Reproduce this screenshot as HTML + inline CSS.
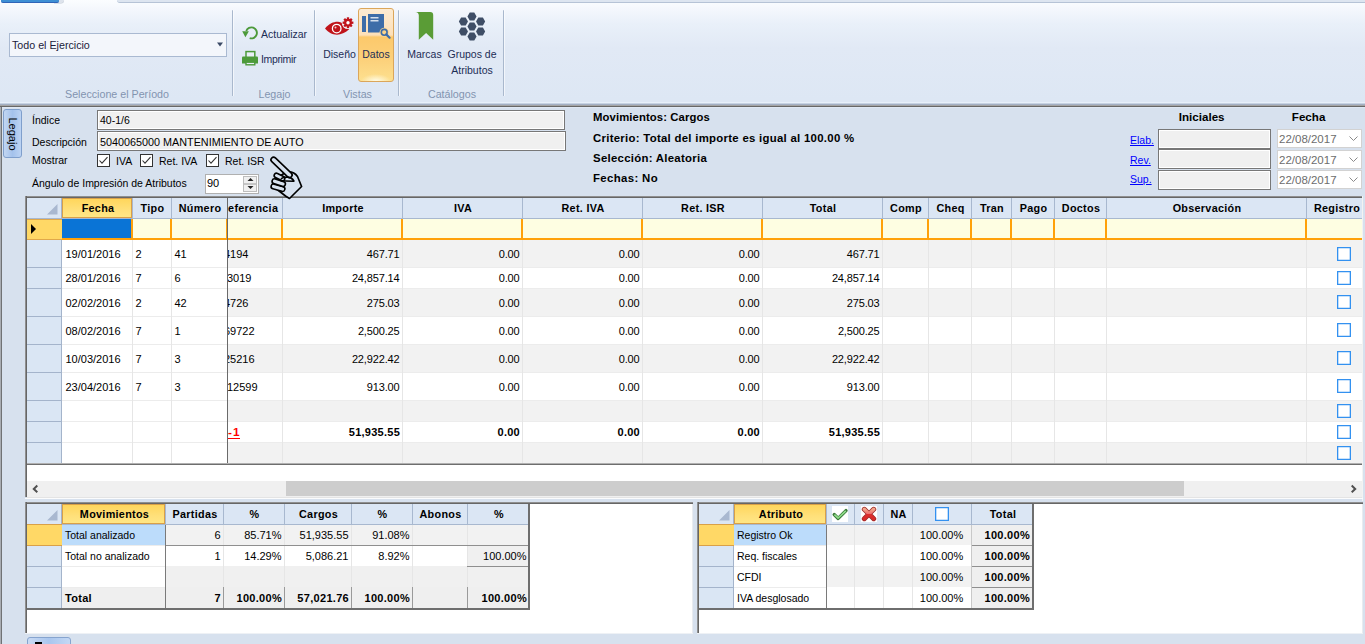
<!DOCTYPE html>
<html><head><meta charset="utf-8"><style>
html,body{margin:0;padding:0;}
body{width:1365px;height:644px;position:relative;overflow:hidden;background:#d7e1ee;font-family:"Liberation Sans", sans-serif;}
.r{position:absolute;box-sizing:content-box;}
svg.r{overflow:visible;}
.t{position:absolute;white-space:nowrap;}
</style></head><body>
<div class="r" style="left:0px;top:0px;width:1365px;height:104px;background:linear-gradient(#fbfdff 0px,#f5f8fd 8px,#e9f0f9 24px,#e1e9f5 48px,#dde7f4 100px);"></div>
<div class="r" style="left:117px;top:0px;width:1248px;height:2px;background:#dde5f0;border-bottom:1px solid #b6c3d6;border-bottom-left-radius:3px;"></div>
<div class="r" style="left:54px;top:0px;width:10px;height:3px;background:#dde3ec;border-bottom-right-radius:3px;box-shadow:0 0.5px 0 #c0c8d4;"></div>
<div class="r" style="left:1px;top:0px;width:58px;height:2px;background:#3e8fd4;border-bottom:1px solid #2f64b8;border-radius:0 0 2px 2px;"></div>
<div class="r" style="left:9px;top:33px;width:216px;height:22px;background:#f3f6fb;border:1px solid #a9b9d1;"></div>
<div class="t" style="top:35.29px;font-size:10.7px;line-height:20px;color:#1a1a3a;left:12px;">Todo el Ejercicio</div>
<svg class="r" style="left:216px;top:42px" width="8" height="6"><path d="M1 0.5 L7 0.5 L4 4.5 Z" fill="#3b4a66"/></svg>
<div class="r" style="left:232px;top:10px;width:1px;height:86px;background:#a9b8cd;border-radius:1px;"></div>
<div class="r" style="left:233px;top:10px;width:1px;height:86px;background:rgba(255,255,255,0.6);"></div>
<div class="r" style="left:314px;top:10px;width:1px;height:86px;background:#a9b8cd;border-radius:1px;"></div>
<div class="r" style="left:315px;top:10px;width:1px;height:86px;background:rgba(255,255,255,0.6);"></div>
<div class="r" style="left:398px;top:10px;width:1px;height:86px;background:#a9b8cd;border-radius:1px;"></div>
<div class="r" style="left:399px;top:10px;width:1px;height:86px;background:rgba(255,255,255,0.6);"></div>
<div class="r" style="left:503px;top:10px;width:1px;height:86px;background:#a9b8cd;border-radius:1px;"></div>
<div class="r" style="left:504px;top:10px;width:1px;height:86px;background:rgba(255,255,255,0.6);"></div>
<div class="t" style="top:84.29px;font-size:10.7px;line-height:20px;color:#8294b0;left:-83.00px;width:400px;text-align:center;">Seleccione el Período</div>
<div class="t" style="top:84.29px;font-size:10.7px;line-height:20px;color:#8294b0;left:74.50px;width:400px;text-align:center;">Legajo</div>
<div class="t" style="top:84.29px;font-size:10.7px;line-height:20px;color:#8294b0;left:157.50px;width:400px;text-align:center;">Vistas</div>
<div class="t" style="top:84.29px;font-size:10.7px;line-height:20px;color:#8294b0;left:252.00px;width:400px;text-align:center;">Catálogos</div>
<div class="t" style="top:24.36px;font-size:10.5px;line-height:20px;color:#1c2d55;left:261px;">Actualizar</div>
<div class="t" style="top:49.36px;font-size:10.5px;line-height:20px;color:#1c2d55;left:261px;letter-spacing:-0.35px;">Imprimir</div>
<svg class="r" style="left:238px;top:22px" width="24" height="46" viewBox="0 0 24 46">
<path d="M8.23 9.02 A5.5 5.5 0 1 1 11.70 16.13" fill="none" stroke="#4c9a3a" stroke-width="1.9"/>
<path d="M4.2 9.2 L10.9 9.2 L7.4 15.2 Z" fill="#4c9a3a"/>
<rect x="8" y="29.6" width="8.8" height="6.4" fill="#e8eef7" stroke="#4c9a3a" stroke-width="1.5"/>
<path d="M5 34.5 L19 34.5 Q20 34.5 20 35.5 L20 41.5 L4 41.5 L4 35.5 Q4 34.5 5 34.5 Z" fill="#4c9a3a"/>
<rect x="8" y="40.2" width="8.8" height="2.6" fill="#e8eef7" stroke="#4c9a3a" stroke-width="1.4"/>
</svg>
<div class="r" style="left:358px;top:8px;width:34px;height:72px;border:1px solid #dba65a;border-radius:3px;background:radial-gradient(ellipse 15px 7px at 50% 100%,#fffbe6,rgba(255,240,180,0)),linear-gradient(#fdebd2 0px,#fde0b8 26px,#fcc96b 28px,#fcd07a 50px,#fde08f 72px);"></div>
<div class="t" style="top:44.36px;font-size:10.5px;line-height:20px;color:#1c2d55;left:139.50px;width:400px;text-align:center;">Diseño</div>
<div class="t" style="top:44.36px;font-size:10.5px;line-height:20px;color:#1c2d55;left:176.00px;width:400px;text-align:center;">Datos</div>
<div class="t" style="top:44.36px;font-size:10.5px;line-height:20px;color:#1c2d55;left:224.50px;width:400px;text-align:center;">Marcas</div>
<div class="t" style="top:44.36px;font-size:10.5px;line-height:20px;color:#1c2d55;left:272.00px;width:400px;text-align:center;">Grupos de</div>
<div class="t" style="top:60.36px;font-size:10.5px;line-height:20px;color:#1c2d55;left:272.00px;width:400px;text-align:center;">Atributos</div>
<svg class="r" style="left:320px;top:12px" width="40" height="28" viewBox="0 0 40 28">
<path d="M5 16.5 C9 11.5 14 9.6 18 9.8 C22 10 25.5 13 29.2 17.3 C25 21 21 22.7 17 22.7 C12 22.7 8 20 5 16.5 Z" fill="#c0141b"/>
<circle cx="16.7" cy="16.6" r="4.3" fill="none" stroke="#fff" stroke-width="1.3"/>
<circle cx="16.7" cy="16.6" r="2.9" fill="#c0141b"/>
<circle cx="15.5" cy="15.4" r="1" fill="#f3c9ca"/>
<circle cx="28" cy="10.7" r="6.3" fill="#eef3fa"/>
<g transform="translate(28,10.7)" fill="#c0141b"><circle r="3.9"/><rect x="-1.15" y="-5.4" width="2.3" height="10.8" transform="rotate(0)"/><rect x="-1.15" y="-5.4" width="2.3" height="10.8" transform="rotate(45)"/><rect x="-1.15" y="-5.4" width="2.3" height="10.8" transform="rotate(90)"/><rect x="-1.15" y="-5.4" width="2.3" height="10.8" transform="rotate(135)"/></g>
<circle cx="28" cy="10.7" r="1.7" fill="#fff"/>
</svg>
<svg class="r" style="left:361px;top:13px" width="30" height="26" viewBox="0 0 30 26">
<rect x="1" y="3" width="4" height="16" fill="#3e6da8"/>
<rect x="7" y="1" width="16" height="18.5" fill="#3e6da8"/>
<rect x="9.5" y="4" width="8" height="1.5" fill="#d6e0ec"/>
<rect x="9.5" y="7" width="8" height="1.5" fill="#d6e0ec"/>
<circle cx="23.2" cy="19.3" r="4.6" fill="#fcd48a"/>
<circle cx="23.2" cy="19.3" r="2.9" fill="none" stroke="#3e6da8" stroke-width="1.6"/>
<path d="M25.3 21.4 L28.6 24.7" stroke="#3e6da8" stroke-width="2.2" stroke-linecap="round"/>
</svg>
<svg class="r" style="left:415px;top:11px" width="20" height="30" viewBox="0 0 20 30">
<path d="M0.3 0.9 L15.2 0.9 Q18.2 0.9 18.2 3.9 L18.2 28.7 L11.1 21.9 L3.8 28.7 L3.8 4.5 Q3.8 1.2 0.3 0.9 Z" fill="#5a9c36"/></svg>
<svg class="r" style="left:458px;top:12px" width="28" height="29" viewBox="0 0 27 28"><path d="M17.90 4.30 L15.70 8.11 L11.30 8.11 L9.10 4.30 L11.30 0.49 L15.70 0.49 Z" fill="#3f4e66"/><path d="M9.60 9.20 L7.40 13.01 L3.00 13.01 L0.80 9.20 L3.00 5.39 L7.40 5.39 Z" fill="#3f4e66"/><path d="M26.20 9.20 L24.00 13.01 L19.60 13.01 L17.40 9.20 L19.60 5.39 L24.00 5.39 Z" fill="#3f4e66"/><path d="M17.90 14.00 L15.70 17.81 L11.30 17.81 L9.10 14.00 L11.30 10.19 L15.70 10.19 Z" fill="#3f4e66"/><path d="M9.60 18.80 L7.40 22.61 L3.00 22.61 L0.80 18.80 L3.00 14.99 L7.40 14.99 Z" fill="#3f4e66"/><path d="M26.20 18.80 L24.00 22.61 L19.60 22.61 L17.40 18.80 L19.60 14.99 L24.00 14.99 Z" fill="#3f4e66"/><path d="M17.90 23.70 L15.70 27.51 L11.30 27.51 L9.10 23.70 L11.30 19.89 L15.70 19.89 Z" fill="#3f4e66"/></svg>
<div class="r" style="left:0px;top:102px;width:1365px;height:1px;background:#e8f0fa;"></div>
<div class="r" style="left:0px;top:103px;width:1365px;height:1px;background:#c6d2e2;"></div>
<div class="r" style="left:0px;top:104px;width:1365px;height:1px;background:#a3afc3;"></div>
<div class="r" style="left:0px;top:105px;width:1365px;height:1px;background:#a5a5a5;"></div>
<div class="r" style="left:0px;top:106px;width:1365px;height:1px;background:#676767;"></div>
<div class="r" style="left:0px;top:107px;width:1365px;height:1px;background:#dfe8f4;"></div>
<div class="r" style="left:0px;top:108px;width:1365px;height:536px;background:#d7e1ee;"></div>
<div class="r" style="left:0px;top:107px;width:1px;height:537px;background:#a9adb3;"></div>
<div class="r" style="left:1px;top:107px;width:1px;height:537px;background:#707275;"></div>
<div class="r" style="left:3px;top:109px;width:17px;height:47px;border:1px solid #7f9fcc;border-radius:3px;background:linear-gradient(90deg,#c2d6f2,#a4c2ec 50%,#bcd3f3);"></div>
<div class="t" style="left:-12.5px;top:123.5px;width:50px;height:20px;font-size:11px;line-height:20px;text-align:center;transform:rotate(90deg);color:#000;">Legajo</div>
<div class="t" style="top:110.36px;font-size:10.5px;line-height:20px;color:#000;left:32px;">Índice</div>
<div class="t" style="top:132.36px;font-size:10.5px;line-height:20px;color:#000;left:32px;">Descripción</div>
<div class="t" style="top:150.36px;font-size:10.5px;line-height:20px;color:#000;left:32px;">Mostrar</div>
<div class="t" style="top:173.36px;font-size:10.5px;line-height:20px;color:#000;left:32px;">Ángulo de Impresión de Atributos</div>
<div class="r" style="left:97px;top:110px;width:466px;height:18px;background:#f0f0f0;border:1px solid #777;box-shadow:inset 0 0 0 1px #fff;"></div>
<div class="r" style="left:97px;top:131px;width:467px;height:18px;background:#f0f0f0;border:1px solid #777;box-shadow:inset 0 0 0 1px #fff;"></div>
<div class="t" style="top:110.36px;font-size:10.5px;line-height:20px;color:#000;left:100px;">40-1/6</div>
<div class="t" style="top:132.26px;font-size:10.8px;line-height:20px;color:#000;left:100px;">5040065000 MANTENIMIENTO DE AUTO</div>
<svg class="r" style="left:97px;top:154px" width="13" height="13" viewBox="0 0 13 13"><rect x="0.5" y="0.5" width="12" height="12" fill="#fff" stroke="#333"/><path d="M2.5 6.5 L5 9.2 L10.5 3.2" fill="none" stroke="#333" stroke-width="1.1"/></svg>
<svg class="r" style="left:140px;top:154px" width="13" height="13" viewBox="0 0 13 13"><rect x="0.5" y="0.5" width="12" height="12" fill="#fff" stroke="#333"/><path d="M2.5 6.5 L5 9.2 L10.5 3.2" fill="none" stroke="#333" stroke-width="1.1"/></svg>
<svg class="r" style="left:206px;top:154px" width="13" height="13" viewBox="0 0 13 13"><rect x="0.5" y="0.5" width="12" height="12" fill="#fff" stroke="#333"/><path d="M2.5 6.5 L5 9.2 L10.5 3.2" fill="none" stroke="#333" stroke-width="1.1"/></svg>
<div class="t" style="top:150.86px;font-size:10.5px;line-height:20px;color:#000;left:116px;">IVA</div>
<div class="t" style="top:150.86px;font-size:10.5px;line-height:20px;color:#000;left:159px;">Ret. IVA</div>
<div class="t" style="top:150.86px;font-size:10.5px;line-height:20px;color:#000;left:225px;">Ret. ISR</div>
<div class="r" style="left:205px;top:174px;width:52px;height:18px;background:#fff;border:1px solid #b0b0b0;"></div>
<div class="t" style="top:173.19px;font-size:11px;line-height:20px;color:#000;left:207px;">90</div>
<div class="r" style="left:243px;top:176px;width:12px;height:14px;background:#f0f0f0;border:1px solid #bdbdbd;"></div>
<div class="r" style="left:244px;top:183px;width:12px;height:2px;background:#c6c6c6;"></div>
<svg class="r" style="left:246px;top:176px" width="9" height="15"><path d="M1.5 5 L4.5 2 L7.5 5 Z" fill="#222"/><path d="M1.5 10 L4.5 13 L7.5 10 Z" fill="#222"/></svg>
<svg class="r" style="left:264px;top:150px;z-index:10" width="46" height="54" viewBox="0 0 46 54"><path d="M22 22 Q30 21 33.5 26.5 L37.6 36.5 L25.5 48.5 L21.5 46 L10 37 Q8 34 9 31 Z" fill="#d8e2ef" stroke="#000" stroke-width="1.7" stroke-linejoin="round"/><path d="M9.5 36.5 L18.5 39" stroke="#000" stroke-width="6.4" stroke-linecap="round"/><path d="M9.5 36.5 L18.5 39" stroke="#d8e2ef" stroke-width="3.2" stroke-linecap="round"/><path d="M10.5 31.2 L19 34" stroke="#000" stroke-width="6.4" stroke-linecap="round"/><path d="M10.5 31.2 L19 34" stroke="#d8e2ef" stroke-width="3.2" stroke-linecap="round"/><path d="M12.5 25.5 L18.5 28.5" stroke="#000" stroke-width="6.2" stroke-linecap="round"/><path d="M12.5 25.5 L18.5 28.5" stroke="#d8e2ef" stroke-width="3" stroke-linecap="round"/><path d="M9.6 9.8 L25.5 25" stroke="#000" stroke-width="6.800000000000001" stroke-linecap="round"/><path d="M9.6 9.8 L25.5 25" stroke="#d8e2ef" stroke-width="3.6" stroke-linecap="round"/><path d="M17.5 28.5 Q19 27 24 27.2 Q28 27.6 29.8 31" fill="none" stroke="#000" stroke-width="1.7" stroke-linecap="round"/><path d="M16.5 30.5 Q20 31 29.5 31.2" fill="none" stroke="#000" stroke-width="1.6" stroke-linecap="round"/></svg>
<div class="t" style="top:107.08px;font-size:11.3px;line-height:20px;color:#000;font-weight:bold;left:593px;letter-spacing:0.1px;">Movimientos: Cargos</div>
<div class="t" style="top:127.75px;font-size:11.4px;line-height:20px;color:#000;font-weight:bold;left:593px;letter-spacing:0.28px;">Criterio: Total del importe es igual al 100.00 %</div>
<div class="t" style="top:148.05px;font-size:11.4px;line-height:20px;color:#000;font-weight:bold;left:593px;letter-spacing:0.28px;">Selección: Aleatoria</div>
<div class="t" style="top:168.05px;font-size:11.4px;line-height:20px;color:#000;font-weight:bold;left:593px;letter-spacing:0.36px;">Fechas: No</div>
<div class="t" style="top:106.98px;font-size:11.6px;line-height:20px;color:#000;font-weight:bold;left:1001.70px;width:400px;text-align:center;">Iniciales</div>
<div class="t" style="top:106.98px;font-size:11.6px;line-height:20px;color:#000;font-weight:bold;left:1108.60px;width:400px;text-align:center;">Fecha</div>
<div class="t" style="top:130.06px;font-size:10.5px;line-height:20px;color:#0000ff;left:1130px;text-decoration:underline;">Elab.</div>
<div class="t" style="top:149.56px;font-size:10.5px;line-height:20px;color:#0000ff;left:1130px;text-decoration:underline;">Rev.</div>
<div class="t" style="top:169.06px;font-size:10.5px;line-height:20px;color:#0000ff;left:1130px;text-decoration:underline;">Sup.</div>
<div class="r" style="left:1158px;top:129px;width:111px;height:18px;background:#f0f0f0;border:1px solid #777;box-shadow:inset 0 0 0 1px #fff;"></div>
<div class="r" style="left:1158px;top:149px;width:111px;height:18px;background:#f0f0f0;border:1px solid #777;box-shadow:inset 0 0 0 1px #fff;"></div>
<div class="r" style="left:1158px;top:170px;width:111px;height:18px;background:#f0f0f0;border:1px solid #777;box-shadow:inset 0 0 0 1px #fff;"></div>
<div class="r" style="left:1277px;top:129px;width:83px;height:17px;background:#fff;border:1px solid #d2d2d2;"></div>
<div class="t" style="top:128.52px;font-size:11.5px;line-height:20px;color:#6d6d6d;left:1279px;">22/08/2017</div>
<svg class="r" style="left:1349px;top:136px" width="9" height="6"><path d="M0.5 0.5 L4.5 4.5 L8.5 0.5" fill="none" stroke="#8a8a8a" stroke-width="1"/></svg>
<div class="r" style="left:1277px;top:150px;width:83px;height:17px;background:#fff;border:1px solid #d2d2d2;"></div>
<div class="t" style="top:149.52px;font-size:11.5px;line-height:20px;color:#6d6d6d;left:1279px;">22/08/2017</div>
<svg class="r" style="left:1349px;top:157px" width="9" height="6"><path d="M0.5 0.5 L4.5 4.5 L8.5 0.5" fill="none" stroke="#8a8a8a" stroke-width="1"/></svg>
<div class="r" style="left:1277px;top:170px;width:83px;height:17px;background:#fff;border:1px solid #d2d2d2;"></div>
<div class="t" style="top:169.52px;font-size:11.5px;line-height:20px;color:#6d6d6d;left:1279px;">22/08/2017</div>
<svg class="r" style="left:1349px;top:177px" width="9" height="6"><path d="M0.5 0.5 L4.5 4.5 L8.5 0.5" fill="none" stroke="#8a8a8a" stroke-width="1"/></svg>
<div class="r" style="left:25px;top:196px;width:1338px;height:2px;background:linear-gradient(#8f8f8f 50%,#666 50%);"></div>
<div class="r" style="left:25px;top:196px;width:2px;height:301px;background:linear-gradient(90deg,#8f8f8f 50%,#666 50%);"></div>
<div class="r" style="left:27px;top:198px;width:1335px;height:21px;background:#dbe6f4;border-bottom:1px solid #a8b8cf;box-sizing:border-box;"></div>
<div class="r" style="left:27px;top:219px;width:35px;height:245px;background:#dae6f4;"></div>
<svg class="r" style="left:47px;top:204px" width="11" height="11"><path d="M10.5 0 L10.5 10.5 L0 10.5 Z" fill="#a9b8d0"/></svg>
<div class="r" style="left:61px;top:198px;width:1px;height:266px;background:#a4b4cb;"></div>
<div class="r" style="left:62px;top:240px;width:165px;height:27px;background:#fff;"></div>
<div class="r" style="left:228px;top:240px;width:1134px;height:27px;background:#f2f2f2;"></div>
<div class="r" style="left:62px;top:267px;width:165px;height:21px;background:#fff;"></div>
<div class="r" style="left:228px;top:267px;width:1134px;height:21px;background:#ffffff;"></div>
<div class="r" style="left:62px;top:288px;width:165px;height:28px;background:#fff;"></div>
<div class="r" style="left:228px;top:288px;width:1134px;height:28px;background:#f2f2f2;"></div>
<div class="r" style="left:62px;top:316px;width:165px;height:28px;background:#fff;"></div>
<div class="r" style="left:228px;top:316px;width:1134px;height:28px;background:#ffffff;"></div>
<div class="r" style="left:62px;top:344px;width:165px;height:28px;background:#fff;"></div>
<div class="r" style="left:228px;top:344px;width:1134px;height:28px;background:#f2f2f2;"></div>
<div class="r" style="left:62px;top:372px;width:165px;height:28px;background:#fff;"></div>
<div class="r" style="left:228px;top:372px;width:1134px;height:28px;background:#ffffff;"></div>
<div class="r" style="left:62px;top:400px;width:165px;height:21px;background:#fff;"></div>
<div class="r" style="left:228px;top:400px;width:1134px;height:21px;background:#f2f2f2;"></div>
<div class="r" style="left:62px;top:421px;width:165px;height:21px;background:#fff;"></div>
<div class="r" style="left:228px;top:421px;width:1134px;height:21px;background:#ffffff;"></div>
<div class="r" style="left:62px;top:442px;width:165px;height:22px;background:#fff;"></div>
<div class="r" style="left:228px;top:442px;width:1134px;height:22px;background:#f2f2f2;"></div>
<div class="r" style="left:62px;top:267px;width:1300px;height:1px;background:#ececec;"></div>
<div class="r" style="left:27px;top:267px;width:35px;height:1px;background:#a4b4cb;"></div>
<div class="r" style="left:62px;top:288px;width:1300px;height:1px;background:#ececec;"></div>
<div class="r" style="left:27px;top:288px;width:35px;height:1px;background:#a4b4cb;"></div>
<div class="r" style="left:62px;top:316px;width:1300px;height:1px;background:#ececec;"></div>
<div class="r" style="left:27px;top:316px;width:35px;height:1px;background:#a4b4cb;"></div>
<div class="r" style="left:62px;top:344px;width:1300px;height:1px;background:#ececec;"></div>
<div class="r" style="left:27px;top:344px;width:35px;height:1px;background:#a4b4cb;"></div>
<div class="r" style="left:62px;top:372px;width:1300px;height:1px;background:#ececec;"></div>
<div class="r" style="left:27px;top:372px;width:35px;height:1px;background:#a4b4cb;"></div>
<div class="r" style="left:62px;top:400px;width:1300px;height:1px;background:#ececec;"></div>
<div class="r" style="left:27px;top:400px;width:35px;height:1px;background:#a4b4cb;"></div>
<div class="r" style="left:62px;top:421px;width:1300px;height:1px;background:#ececec;"></div>
<div class="r" style="left:27px;top:421px;width:35px;height:1px;background:#a4b4cb;"></div>
<div class="r" style="left:62px;top:442px;width:1300px;height:1px;background:#ececec;"></div>
<div class="r" style="left:27px;top:442px;width:35px;height:1px;background:#a4b4cb;"></div>
<div class="r" style="left:132px;top:240px;width:1px;height:224px;background:#e6e6e6;"></div>
<div class="r" style="left:171px;top:240px;width:1px;height:224px;background:#e6e6e6;"></div>
<div class="r" style="left:282px;top:240px;width:1px;height:224px;background:#e6e6e6;"></div>
<div class="r" style="left:402px;top:240px;width:1px;height:224px;background:#e6e6e6;"></div>
<div class="r" style="left:522px;top:240px;width:1px;height:224px;background:#e6e6e6;"></div>
<div class="r" style="left:642px;top:240px;width:1px;height:224px;background:#e6e6e6;"></div>
<div class="r" style="left:762px;top:240px;width:1px;height:224px;background:#e6e6e6;"></div>
<div class="r" style="left:882px;top:240px;width:1px;height:224px;background:#e6e6e6;"></div>
<div class="r" style="left:928px;top:240px;width:1px;height:224px;background:#e6e6e6;"></div>
<div class="r" style="left:971px;top:240px;width:1px;height:224px;background:#e6e6e6;"></div>
<div class="r" style="left:1011px;top:240px;width:1px;height:224px;background:#e6e6e6;"></div>
<div class="r" style="left:1054px;top:240px;width:1px;height:224px;background:#e6e6e6;"></div>
<div class="r" style="left:1106px;top:240px;width:1px;height:224px;background:#e6e6e6;"></div>
<div class="r" style="left:1306px;top:240px;width:1px;height:224px;background:#e6e6e6;"></div>
<div class="r" style="left:132px;top:198px;width:1px;height:20px;background:#a8b8cf;"></div>
<div class="r" style="left:171px;top:198px;width:1px;height:20px;background:#a8b8cf;"></div>
<div class="r" style="left:227px;top:198px;width:1px;height:20px;background:#a8b8cf;"></div>
<div class="r" style="left:282px;top:198px;width:1px;height:20px;background:#a8b8cf;"></div>
<div class="r" style="left:402px;top:198px;width:1px;height:20px;background:#a8b8cf;"></div>
<div class="r" style="left:522px;top:198px;width:1px;height:20px;background:#a8b8cf;"></div>
<div class="r" style="left:642px;top:198px;width:1px;height:20px;background:#a8b8cf;"></div>
<div class="r" style="left:762px;top:198px;width:1px;height:20px;background:#a8b8cf;"></div>
<div class="r" style="left:882px;top:198px;width:1px;height:20px;background:#a8b8cf;"></div>
<div class="r" style="left:928px;top:198px;width:1px;height:20px;background:#a8b8cf;"></div>
<div class="r" style="left:971px;top:198px;width:1px;height:20px;background:#a8b8cf;"></div>
<div class="r" style="left:1011px;top:198px;width:1px;height:20px;background:#a8b8cf;"></div>
<div class="r" style="left:1054px;top:198px;width:1px;height:20px;background:#a8b8cf;"></div>
<div class="r" style="left:1106px;top:198px;width:1px;height:20px;background:#a8b8cf;"></div>
<div class="r" style="left:1306px;top:198px;width:1px;height:20px;background:#a8b8cf;"></div>
<div class="r" style="left:62px;top:198px;width:70px;height:20px;background:linear-gradient(#ffd65c,#ffe07a 60%,#ffe685);border:1px solid #d9a048;box-sizing:border-box;"></div>
<div class="r" style="left:62px;top:219px;width:1300px;height:21px;background:#fefee2;"></div>
<div class="r" style="left:27px;top:219px;width:35px;height:21px;background:#ffd866;border-top:1px solid #e0a84a;border-bottom:1px solid #e0a84a;box-sizing:border-box;"></div>
<svg class="r" style="left:31px;top:224px" width="6" height="10"><path d="M0 0 L5 5 L0 10 Z" fill="#000"/></svg>
<div class="r" style="left:62px;top:219px;width:69px;height:19px;background:#0a74d6;"></div>
<div class="r" style="left:62px;top:238px;width:1300px;height:2px;background:#ffa10a;"></div>
<div class="r" style="left:131px;top:219px;width:2px;height:21px;background:#ffa10a;"></div>
<div class="r" style="left:170px;top:219px;width:2px;height:21px;background:#ffa10a;"></div>
<div class="r" style="left:226px;top:219px;width:2px;height:21px;background:#ffa10a;"></div>
<div class="r" style="left:281px;top:219px;width:2px;height:21px;background:#ffa10a;"></div>
<div class="r" style="left:401px;top:219px;width:2px;height:21px;background:#ffa10a;"></div>
<div class="r" style="left:521px;top:219px;width:2px;height:21px;background:#ffa10a;"></div>
<div class="r" style="left:641px;top:219px;width:2px;height:21px;background:#ffa10a;"></div>
<div class="r" style="left:761px;top:219px;width:2px;height:21px;background:#ffa10a;"></div>
<div class="r" style="left:881px;top:219px;width:2px;height:21px;background:#ffa10a;"></div>
<div class="r" style="left:927px;top:219px;width:2px;height:21px;background:#ffa10a;"></div>
<div class="r" style="left:970px;top:219px;width:2px;height:21px;background:#ffa10a;"></div>
<div class="r" style="left:1010px;top:219px;width:2px;height:21px;background:#ffa10a;"></div>
<div class="r" style="left:1053px;top:219px;width:2px;height:21px;background:#ffa10a;"></div>
<div class="r" style="left:1105px;top:219px;width:2px;height:21px;background:#ffa10a;"></div>
<div class="r" style="left:1305px;top:219px;width:2px;height:21px;background:#ffa10a;"></div>
<div class="r" style="left:227px;top:198px;width:1px;height:266px;background:#6a6a6a;"></div>
<div class="t" style="top:198.26px;font-size:10.8px;line-height:20px;color:#000;font-weight:bold;left:-102.00px;width:400px;text-align:center;letter-spacing:0.3px;">Fecha</div>
<div class="t" style="top:198.26px;font-size:10.8px;line-height:20px;color:#000;font-weight:bold;left:-47.50px;width:400px;text-align:center;letter-spacing:0.3px;">Tipo</div>
<div class="t" style="top:198.26px;font-size:10.8px;line-height:20px;color:#000;font-weight:bold;left:0.00px;width:400px;text-align:center;letter-spacing:0.3px;">Número</div>
<div class="r" style="left:228px;top:198px;width:54px;height:20px;overflow:hidden;"><div class="t" style="left:-8px;top:0.3px;font-size:10.8px;line-height:20px;font-weight:bold;letter-spacing:0.3px;">Referencia</div></div>
<div class="t" style="top:198.26px;font-size:10.8px;line-height:20px;color:#000;font-weight:bold;left:143.00px;width:400px;text-align:center;letter-spacing:0.3px;">Importe</div>
<div class="t" style="top:198.26px;font-size:10.8px;line-height:20px;color:#000;font-weight:bold;left:263.00px;width:400px;text-align:center;letter-spacing:0.3px;">IVA</div>
<div class="t" style="top:198.26px;font-size:10.8px;line-height:20px;color:#000;font-weight:bold;left:383.00px;width:400px;text-align:center;letter-spacing:0.3px;">Ret. IVA</div>
<div class="t" style="top:198.26px;font-size:10.8px;line-height:20px;color:#000;font-weight:bold;left:503.00px;width:400px;text-align:center;letter-spacing:0.3px;">Ret. ISR</div>
<div class="t" style="top:198.26px;font-size:10.8px;line-height:20px;color:#000;font-weight:bold;left:623.00px;width:400px;text-align:center;letter-spacing:0.3px;">Total</div>
<div class="t" style="top:198.26px;font-size:10.8px;line-height:20px;color:#000;font-weight:bold;left:706.00px;width:400px;text-align:center;letter-spacing:0.3px;">Comp</div>
<div class="t" style="top:198.26px;font-size:10.8px;line-height:20px;color:#000;font-weight:bold;left:750.50px;width:400px;text-align:center;letter-spacing:0.3px;">Cheq</div>
<div class="t" style="top:198.26px;font-size:10.8px;line-height:20px;color:#000;font-weight:bold;left:792.00px;width:400px;text-align:center;letter-spacing:0.3px;">Tran</div>
<div class="t" style="top:198.26px;font-size:10.8px;line-height:20px;color:#000;font-weight:bold;left:833.50px;width:400px;text-align:center;letter-spacing:0.3px;">Pago</div>
<div class="t" style="top:198.26px;font-size:10.8px;line-height:20px;color:#000;font-weight:bold;left:881.00px;width:400px;text-align:center;letter-spacing:0.3px;">Doctos</div>
<div class="t" style="top:198.26px;font-size:10.8px;line-height:20px;color:#000;font-weight:bold;left:1007.00px;width:400px;text-align:center;letter-spacing:0.3px;">Observación</div>
<div class="t" style="top:198.26px;font-size:10.8px;line-height:20px;color:#000;font-weight:bold;left:1137.00px;width:400px;text-align:center;letter-spacing:0.3px;">Registro</div>
<div class="t" style="top:244.29px;font-size:11px;line-height:20px;color:#000;left:65.5px;">19/01/2016</div>
<div class="t" style="top:244.29px;font-size:11px;line-height:20px;color:#000;left:135.5px;">2</div>
<div class="t" style="top:244.29px;font-size:11px;line-height:20px;color:#000;left:174.5px;">41</div>
<div class="r" style="left:228px;top:240px;width:54px;height:27px;overflow:hidden;"><div class="t" style="left:-4px;top:4.29px;font-size:11px;line-height:20px;">4194</div></div>
<div class="t" style="top:244.29px;font-size:11px;line-height:20px;color:#000;right:965.5px;text-align:right;letter-spacing:-0.15px;">467.71</div>
<div class="t" style="top:244.29px;font-size:11px;line-height:20px;color:#000;right:845.5px;text-align:right;letter-spacing:-0.15px;">0.00</div>
<div class="t" style="top:244.29px;font-size:11px;line-height:20px;color:#000;right:725.5px;text-align:right;letter-spacing:-0.15px;">0.00</div>
<div class="t" style="top:244.29px;font-size:11px;line-height:20px;color:#000;right:605.5px;text-align:right;letter-spacing:-0.15px;">0.00</div>
<div class="t" style="top:244.29px;font-size:11px;line-height:20px;color:#000;right:485.5px;text-align:right;letter-spacing:-0.15px;">467.71</div>
<div class="t" style="top:268.29px;font-size:11px;line-height:20px;color:#000;left:65.5px;">28/01/2016</div>
<div class="t" style="top:268.29px;font-size:11px;line-height:20px;color:#000;left:135.5px;">7</div>
<div class="t" style="top:268.29px;font-size:11px;line-height:20px;color:#000;left:174.5px;">6</div>
<div class="r" style="left:228px;top:267px;width:54px;height:21px;overflow:hidden;"><div class="t" style="left:-1px;top:1.29px;font-size:11px;line-height:20px;">3019</div></div>
<div class="t" style="top:268.29px;font-size:11px;line-height:20px;color:#000;right:965.5px;text-align:right;letter-spacing:-0.15px;">24,857.14</div>
<div class="t" style="top:268.29px;font-size:11px;line-height:20px;color:#000;right:845.5px;text-align:right;letter-spacing:-0.15px;">0.00</div>
<div class="t" style="top:268.29px;font-size:11px;line-height:20px;color:#000;right:725.5px;text-align:right;letter-spacing:-0.15px;">0.00</div>
<div class="t" style="top:268.29px;font-size:11px;line-height:20px;color:#000;right:605.5px;text-align:right;letter-spacing:-0.15px;">0.00</div>
<div class="t" style="top:268.29px;font-size:11px;line-height:20px;color:#000;right:485.5px;text-align:right;letter-spacing:-0.15px;">24,857.14</div>
<div class="t" style="top:292.79px;font-size:11px;line-height:20px;color:#000;left:65.5px;">02/02/2016</div>
<div class="t" style="top:292.79px;font-size:11px;line-height:20px;color:#000;left:135.5px;">2</div>
<div class="t" style="top:292.79px;font-size:11px;line-height:20px;color:#000;left:174.5px;">42</div>
<div class="r" style="left:228px;top:288px;width:54px;height:28px;overflow:hidden;"><div class="t" style="left:-4px;top:4.79px;font-size:11px;line-height:20px;">4726</div></div>
<div class="t" style="top:292.79px;font-size:11px;line-height:20px;color:#000;right:965.5px;text-align:right;letter-spacing:-0.15px;">275.03</div>
<div class="t" style="top:292.79px;font-size:11px;line-height:20px;color:#000;right:845.5px;text-align:right;letter-spacing:-0.15px;">0.00</div>
<div class="t" style="top:292.79px;font-size:11px;line-height:20px;color:#000;right:725.5px;text-align:right;letter-spacing:-0.15px;">0.00</div>
<div class="t" style="top:292.79px;font-size:11px;line-height:20px;color:#000;right:605.5px;text-align:right;letter-spacing:-0.15px;">0.00</div>
<div class="t" style="top:292.79px;font-size:11px;line-height:20px;color:#000;right:485.5px;text-align:right;letter-spacing:-0.15px;">275.03</div>
<div class="t" style="top:320.79px;font-size:11px;line-height:20px;color:#000;left:65.5px;">08/02/2016</div>
<div class="t" style="top:320.79px;font-size:11px;line-height:20px;color:#000;left:135.5px;">7</div>
<div class="t" style="top:320.79px;font-size:11px;line-height:20px;color:#000;left:174.5px;">1</div>
<div class="r" style="left:228px;top:316px;width:54px;height:28px;overflow:hidden;"><div class="t" style="left:-4px;top:4.79px;font-size:11px;line-height:20px;">69722</div></div>
<div class="t" style="top:320.79px;font-size:11px;line-height:20px;color:#000;right:965.5px;text-align:right;letter-spacing:-0.15px;">2,500.25</div>
<div class="t" style="top:320.79px;font-size:11px;line-height:20px;color:#000;right:845.5px;text-align:right;letter-spacing:-0.15px;">0.00</div>
<div class="t" style="top:320.79px;font-size:11px;line-height:20px;color:#000;right:725.5px;text-align:right;letter-spacing:-0.15px;">0.00</div>
<div class="t" style="top:320.79px;font-size:11px;line-height:20px;color:#000;right:605.5px;text-align:right;letter-spacing:-0.15px;">0.00</div>
<div class="t" style="top:320.79px;font-size:11px;line-height:20px;color:#000;right:485.5px;text-align:right;letter-spacing:-0.15px;">2,500.25</div>
<div class="t" style="top:348.79px;font-size:11px;line-height:20px;color:#000;left:65.5px;">10/03/2016</div>
<div class="t" style="top:348.79px;font-size:11px;line-height:20px;color:#000;left:135.5px;">7</div>
<div class="t" style="top:348.79px;font-size:11px;line-height:20px;color:#000;left:174.5px;">3</div>
<div class="r" style="left:228px;top:344px;width:54px;height:28px;overflow:hidden;"><div class="t" style="left:-4px;top:4.79px;font-size:11px;line-height:20px;">25216</div></div>
<div class="t" style="top:348.79px;font-size:11px;line-height:20px;color:#000;right:965.5px;text-align:right;letter-spacing:-0.15px;">22,922.42</div>
<div class="t" style="top:348.79px;font-size:11px;line-height:20px;color:#000;right:845.5px;text-align:right;letter-spacing:-0.15px;">0.00</div>
<div class="t" style="top:348.79px;font-size:11px;line-height:20px;color:#000;right:725.5px;text-align:right;letter-spacing:-0.15px;">0.00</div>
<div class="t" style="top:348.79px;font-size:11px;line-height:20px;color:#000;right:605.5px;text-align:right;letter-spacing:-0.15px;">0.00</div>
<div class="t" style="top:348.79px;font-size:11px;line-height:20px;color:#000;right:485.5px;text-align:right;letter-spacing:-0.15px;">22,922.42</div>
<div class="t" style="top:376.79px;font-size:11px;line-height:20px;color:#000;left:65.5px;">23/04/2016</div>
<div class="t" style="top:376.79px;font-size:11px;line-height:20px;color:#000;left:135.5px;">7</div>
<div class="t" style="top:376.79px;font-size:11px;line-height:20px;color:#000;left:174.5px;">3</div>
<div class="r" style="left:228px;top:372px;width:54px;height:28px;overflow:hidden;"><div class="t" style="left:-1px;top:4.79px;font-size:11px;line-height:20px;">12599</div></div>
<div class="t" style="top:376.79px;font-size:11px;line-height:20px;color:#000;right:965.5px;text-align:right;letter-spacing:-0.15px;">913.00</div>
<div class="t" style="top:376.79px;font-size:11px;line-height:20px;color:#000;right:845.5px;text-align:right;letter-spacing:-0.15px;">0.00</div>
<div class="t" style="top:376.79px;font-size:11px;line-height:20px;color:#000;right:725.5px;text-align:right;letter-spacing:-0.15px;">0.00</div>
<div class="t" style="top:376.79px;font-size:11px;line-height:20px;color:#000;right:605.5px;text-align:right;letter-spacing:-0.15px;">0.00</div>
<div class="t" style="top:376.79px;font-size:11px;line-height:20px;color:#000;right:485.5px;text-align:right;letter-spacing:-0.15px;">913.00</div>
<div class="t" style="top:422.01px;font-size:11.8px;line-height:20px;color:#ff0000;font-weight:bold;left:228px;letter-spacing:1px;">-1</div>
<div class="r" style="left:228px;top:438px;width:12px;height:1px;background:#ff0000;"></div>
<div class="t" style="top:422.29px;font-size:11px;line-height:20px;color:#000;font-weight:bold;right:965px;text-align:right;letter-spacing:0.25px;">51,935.55</div>
<div class="t" style="top:422.29px;font-size:11px;line-height:20px;color:#000;font-weight:bold;right:845px;text-align:right;letter-spacing:0.25px;">0.00</div>
<div class="t" style="top:422.29px;font-size:11px;line-height:20px;color:#000;font-weight:bold;right:725px;text-align:right;letter-spacing:0.25px;">0.00</div>
<div class="t" style="top:422.29px;font-size:11px;line-height:20px;color:#000;font-weight:bold;right:605px;text-align:right;letter-spacing:0.25px;">0.00</div>
<div class="t" style="top:422.29px;font-size:11px;line-height:20px;color:#000;font-weight:bold;right:485px;text-align:right;letter-spacing:0.25px;">51,935.55</div>
<div class="r" style="left:1337px;top:246.5px;width:12px;height:12px;border:1px solid #3391f0;background:#fff;box-shadow:inset 0 0 0 0.3px #3391f0;"></div>
<div class="r" style="left:1337px;top:270.5px;width:12px;height:12px;border:1px solid #3391f0;background:#fff;box-shadow:inset 0 0 0 0.3px #3391f0;"></div>
<div class="r" style="left:1337px;top:295.0px;width:12px;height:12px;border:1px solid #3391f0;background:#fff;box-shadow:inset 0 0 0 0.3px #3391f0;"></div>
<div class="r" style="left:1337px;top:323.0px;width:12px;height:12px;border:1px solid #3391f0;background:#fff;box-shadow:inset 0 0 0 0.3px #3391f0;"></div>
<div class="r" style="left:1337px;top:351.0px;width:12px;height:12px;border:1px solid #3391f0;background:#fff;box-shadow:inset 0 0 0 0.3px #3391f0;"></div>
<div class="r" style="left:1337px;top:379.0px;width:12px;height:12px;border:1px solid #3391f0;background:#fff;box-shadow:inset 0 0 0 0.3px #3391f0;"></div>
<div class="r" style="left:1337px;top:403.5px;width:12px;height:12px;border:1px solid #3391f0;background:#fff;box-shadow:inset 0 0 0 0.3px #3391f0;"></div>
<div class="r" style="left:1337px;top:424.5px;width:12px;height:12px;border:1px solid #3391f0;background:#fff;box-shadow:inset 0 0 0 0.3px #3391f0;"></div>
<div class="r" style="left:1337px;top:446.0px;width:12px;height:12px;border:1px solid #3391f0;background:#fff;box-shadow:inset 0 0 0 0.3px #3391f0;"></div>
<div class="r" style="left:27px;top:463px;width:1335px;height:1px;background:#b0b0b0;"></div>
<div class="r" style="left:27px;top:464px;width:1335px;height:1px;background:#6e6e6e;"></div>
<div class="r" style="left:27px;top:465px;width:1335px;height:16px;background:#fff;"></div>
<div class="r" style="left:1362px;top:196px;width:1px;height:305px;background:#f3f3f3;"></div>
<div class="r" style="left:27px;top:481px;width:1335px;height:16px;background:#f0f0f0;"></div>
<div class="r" style="left:286px;top:481px;width:898px;height:15px;background:#cdcdcd;"></div>
<svg class="r" style="left:31px;top:484px" width="9" height="10"><path d="M6.3 1.6 L2.8 4.9 L6.3 8.2" fill="none" stroke="#505050" stroke-width="2"/></svg>
<svg class="r" style="left:1349px;top:484px" width="9" height="10"><path d="M2.7 1.6 L6.2 4.9 L2.7 8.2" fill="none" stroke="#505050" stroke-width="2"/></svg>
<div class="r" style="left:27px;top:497px;width:1335px;height:1px;background:#e4e4e4;"></div>
<div class="r" style="left:25px;top:498px;width:1338px;height:1px;background:#fbfcfd;"></div>
<div class="r" style="left:25px;top:502px;width:668px;height:132px;background:#fff;"></div>
<div class="r" style="left:25px;top:502px;width:668px;height:2px;background:linear-gradient(#8f8f8f 50%,#666 50%);"></div>
<div class="r" style="left:25px;top:502px;width:2px;height:132px;background:linear-gradient(90deg,#8f8f8f 50%,#666 50%);"></div>
<div class="r" style="left:692px;top:504px;width:1px;height:130px;background:#e9ecf0;"></div>
<div class="r" style="left:25px;top:633px;width:668px;height:1px;background:#eef1f5;"></div>
<div class="r" style="left:697px;top:502px;width:666px;height:132px;background:#fff;"></div>
<div class="r" style="left:697px;top:502px;width:666px;height:2px;background:linear-gradient(#8f8f8f 50%,#666 50%);"></div>
<div class="r" style="left:697px;top:502px;width:2px;height:132px;background:linear-gradient(90deg,#8f8f8f 50%,#666 50%);"></div>
<div class="r" style="left:1362px;top:504px;width:1px;height:130px;background:#e9ecf0;"></div>
<div class="r" style="left:697px;top:633px;width:666px;height:1px;background:#eef1f5;"></div>
<div class="r" style="left:62px;top:525px;width:467px;height:20px;background:#f2f2f2;"></div>
<div class="r" style="left:62px;top:525px;width:103px;height:20px;background:#bcdcfb;"></div>
<div class="r" style="left:62px;top:545px;width:467px;height:21px;background:#fff;"></div>
<div class="r" style="left:62px;top:566px;width:467px;height:21px;background:#f0f0f0;"></div>
<div class="r" style="left:62px;top:587px;width:467px;height:21px;background:#efefef;"></div>
<div class="r" style="left:62px;top:566px;width:103px;height:21px;background:#fff;"></div>
<div class="r" style="left:62px;top:587px;width:103px;height:21px;background:#efefef;"></div>
<div class="r" style="left:467px;top:545px;width:62px;height:21px;background:#f0f0f0;"></div>
<div class="r" style="left:165px;top:525px;width:1px;height:83px;background:#e6e6e6;"></div>
<div class="r" style="left:223px;top:525px;width:1px;height:83px;background:#e6e6e6;"></div>
<div class="r" style="left:284px;top:525px;width:1px;height:83px;background:#e6e6e6;"></div>
<div class="r" style="left:351px;top:525px;width:1px;height:83px;background:#e6e6e6;"></div>
<div class="r" style="left:412px;top:525px;width:1px;height:83px;background:#e6e6e6;"></div>
<div class="r" style="left:467px;top:525px;width:1px;height:83px;background:#e6e6e6;"></div>
<div class="r" style="left:165px;top:545px;width:364px;height:1px;background:#8f8f8f;"></div>
<div class="r" style="left:467px;top:566px;width:62px;height:1px;background:#8f8f8f;"></div>
<div class="r" style="left:165px;top:525px;width:1px;height:83px;background:#7a7a7a;"></div>
<div class="r" style="left:223px;top:587px;width:1px;height:21px;background:#9a9a9a;"></div>
<div class="r" style="left:284px;top:587px;width:1px;height:21px;background:#9a9a9a;"></div>
<div class="r" style="left:351px;top:587px;width:1px;height:21px;background:#9a9a9a;"></div>
<div class="r" style="left:412px;top:587px;width:1px;height:21px;background:#9a9a9a;"></div>
<div class="r" style="left:467px;top:587px;width:1px;height:21px;background:#9a9a9a;"></div>
<div class="r" style="left:27px;top:504px;width:502px;height:21px;background:#dbe6f4;border-bottom:1px solid #a8b8cf;box-sizing:border-box;"></div>
<div class="r" style="left:27px;top:525px;width:35px;height:83px;background:#dae6f4;"></div>
<svg class="r" style="left:47px;top:510px" width="11" height="11"><path d="M10.5 0 L10.5 10.5 L0 10.5 Z" fill="#a9b8d0"/></svg>
<div class="r" style="left:61px;top:504px;width:1px;height:104px;background:#a4b4cb;"></div>
<div class="r" style="left:27px;top:545px;width:35px;height:1px;background:#a4b4cb;"></div>
<div class="r" style="left:62px;top:545px;width:103px;height:1px;background:#ececec;"></div>
<div class="r" style="left:27px;top:566px;width:35px;height:1px;background:#a4b4cb;"></div>
<div class="r" style="left:62px;top:566px;width:103px;height:1px;background:#ececec;"></div>
<div class="r" style="left:27px;top:587px;width:35px;height:1px;background:#a4b4cb;"></div>
<div class="r" style="left:62px;top:587px;width:103px;height:1px;background:#ececec;"></div>
<div class="r" style="left:165px;top:504px;width:1px;height:20px;background:#a8b8cf;"></div>
<div class="r" style="left:223px;top:504px;width:1px;height:20px;background:#a8b8cf;"></div>
<div class="r" style="left:284px;top:504px;width:1px;height:20px;background:#a8b8cf;"></div>
<div class="r" style="left:351px;top:504px;width:1px;height:20px;background:#a8b8cf;"></div>
<div class="r" style="left:412px;top:504px;width:1px;height:20px;background:#a8b8cf;"></div>
<div class="r" style="left:467px;top:504px;width:1px;height:20px;background:#a8b8cf;"></div>
<div class="r" style="left:62px;top:504px;width:103px;height:20px;background:linear-gradient(#ffd65c,#ffe07a 60%,#ffe685);border:1px solid #d9a048;box-sizing:border-box;"></div>
<div class="r" style="left:27px;top:524px;width:35px;height:22px;background:#ffd866;border-top:1px solid #d9a048;border-bottom:1px solid #d9a048;box-sizing:border-box;"></div>
<div class="t" style="top:504.26px;font-size:10.8px;line-height:20px;color:#000;font-weight:bold;left:-85.50px;width:400px;text-align:center;letter-spacing:0.3px;">Movimientos</div>
<div class="t" style="top:504.26px;font-size:10.8px;line-height:20px;color:#000;font-weight:bold;left:-5.00px;width:400px;text-align:center;letter-spacing:0.3px;">Partidas</div>
<div class="t" style="top:504.26px;font-size:10.8px;line-height:20px;color:#000;font-weight:bold;left:54.50px;width:400px;text-align:center;letter-spacing:0.3px;">%</div>
<div class="t" style="top:504.26px;font-size:10.8px;line-height:20px;color:#000;font-weight:bold;left:118.50px;width:400px;text-align:center;letter-spacing:0.3px;">Cargos</div>
<div class="t" style="top:504.26px;font-size:10.8px;line-height:20px;color:#000;font-weight:bold;left:182.50px;width:400px;text-align:center;letter-spacing:0.3px;">%</div>
<div class="t" style="top:504.26px;font-size:10.8px;line-height:20px;color:#000;font-weight:bold;left:240.50px;width:400px;text-align:center;letter-spacing:0.3px;">Abonos</div>
<div class="t" style="top:504.26px;font-size:10.8px;line-height:20px;color:#000;font-weight:bold;left:299.00px;width:400px;text-align:center;letter-spacing:0.3px;">%</div>
<div class="r" style="left:528px;top:504px;width:2px;height:105px;background:#6e6e6e;"></div>
<div class="r" style="left:27px;top:608px;width:503px;height:2px;background:#6e6e6e;"></div>
<div class="t" style="top:525.36px;font-size:10.5px;line-height:20px;color:#000;left:65px;">Total analizado</div>
<div class="t" style="top:525.19px;font-size:11px;line-height:20px;color:#000;right:1144.5px;text-align:right;">6</div>
<div class="t" style="top:525.19px;font-size:11px;line-height:20px;color:#000;right:1083.5px;text-align:right;">85.71%</div>
<div class="t" style="top:525.19px;font-size:11px;line-height:20px;color:#000;right:1016.5px;text-align:right;">51,935.55</div>
<div class="t" style="top:525.19px;font-size:11px;line-height:20px;color:#000;right:955.5px;text-align:right;">91.08%</div>
<div class="t" style="top:546.36px;font-size:10.5px;line-height:20px;color:#000;left:65px;">Total no analizado</div>
<div class="t" style="top:546.19px;font-size:11px;line-height:20px;color:#000;right:1144.5px;text-align:right;">1</div>
<div class="t" style="top:546.19px;font-size:11px;line-height:20px;color:#000;right:1083.5px;text-align:right;">14.29%</div>
<div class="t" style="top:546.19px;font-size:11px;line-height:20px;color:#000;right:1016.5px;text-align:right;">5,086.21</div>
<div class="t" style="top:546.19px;font-size:11px;line-height:20px;color:#000;right:955.5px;text-align:right;">8.92%</div>
<div class="t" style="top:546.19px;font-size:11px;line-height:20px;color:#000;right:838.5px;text-align:right;">100.00%</div>
<div class="t" style="top:588.19px;font-size:11px;line-height:20px;color:#000;font-weight:bold;left:65px;letter-spacing:0.3px;">Total</div>
<div class="t" style="top:588.19px;font-size:11px;line-height:20px;color:#000;font-weight:bold;right:1144px;text-align:right;letter-spacing:0.3px;">7</div>
<div class="t" style="top:588.19px;font-size:11px;line-height:20px;color:#000;font-weight:bold;right:1083px;text-align:right;letter-spacing:0.3px;">100.00%</div>
<div class="t" style="top:588.19px;font-size:11px;line-height:20px;color:#000;font-weight:bold;right:1016px;text-align:right;letter-spacing:0.3px;">57,021.76</div>
<div class="t" style="top:588.19px;font-size:11px;line-height:20px;color:#000;font-weight:bold;right:955px;text-align:right;letter-spacing:0.3px;">100.00%</div>
<div class="t" style="top:588.19px;font-size:11px;line-height:20px;color:#000;font-weight:bold;right:838px;text-align:right;letter-spacing:0.3px;">100.00%</div>
<div class="r" style="left:734px;top:525px;width:299px;height:20px;background:#f2f2f2;"></div>
<div class="r" style="left:734px;top:525px;width:92px;height:20px;background:#bcdcfb;"></div>
<div class="r" style="left:734px;top:545px;width:299px;height:21px;background:#fff;"></div>
<div class="r" style="left:734px;top:566px;width:299px;height:21px;background:#f2f2f2;"></div>
<div class="r" style="left:734px;top:566px;width:92px;height:21px;background:#fff;"></div>
<div class="r" style="left:734px;top:587px;width:299px;height:21px;background:#fff;"></div>
<div class="r" style="left:971px;top:525px;width:62px;height:83px;background:#efefef;"></div>
<div class="r" style="left:826px;top:525px;width:1px;height:83px;background:#e6e6e6;"></div>
<div class="r" style="left:854px;top:525px;width:1px;height:83px;background:#e6e6e6;"></div>
<div class="r" style="left:883px;top:525px;width:1px;height:83px;background:#e6e6e6;"></div>
<div class="r" style="left:912px;top:525px;width:1px;height:83px;background:#e6e6e6;"></div>
<div class="r" style="left:971px;top:525px;width:1px;height:83px;background:#e6e6e6;"></div>
<div class="r" style="left:971px;top:545px;width:62px;height:1px;background:#8f8f8f;"></div>
<div class="r" style="left:971px;top:566px;width:62px;height:1px;background:#8f8f8f;"></div>
<div class="r" style="left:971px;top:587px;width:62px;height:1px;background:#8f8f8f;"></div>
<div class="r" style="left:826px;top:525px;width:1px;height:83px;background:#7a7a7a;"></div>
<div class="r" style="left:971px;top:525px;width:1px;height:83px;background:#c9c9c9;"></div>
<div class="r" style="left:699px;top:504px;width:334px;height:21px;background:#dbe6f4;border-bottom:1px solid #a8b8cf;box-sizing:border-box;"></div>
<div class="r" style="left:699px;top:525px;width:35px;height:83px;background:#dae6f4;"></div>
<svg class="r" style="left:719px;top:510px" width="11" height="11"><path d="M10.5 0 L10.5 10.5 L0 10.5 Z" fill="#a9b8d0"/></svg>
<div class="r" style="left:733px;top:504px;width:1px;height:104px;background:#a4b4cb;"></div>
<div class="r" style="left:699px;top:545px;width:35px;height:1px;background:#a4b4cb;"></div>
<div class="r" style="left:734px;top:545px;width:92px;height:1px;background:#ececec;"></div>
<div class="r" style="left:699px;top:566px;width:35px;height:1px;background:#a4b4cb;"></div>
<div class="r" style="left:734px;top:566px;width:92px;height:1px;background:#ececec;"></div>
<div class="r" style="left:699px;top:587px;width:35px;height:1px;background:#a4b4cb;"></div>
<div class="r" style="left:734px;top:587px;width:92px;height:1px;background:#ececec;"></div>
<div class="r" style="left:826px;top:504px;width:1px;height:20px;background:#a8b8cf;"></div>
<div class="r" style="left:854px;top:504px;width:1px;height:20px;background:#a8b8cf;"></div>
<div class="r" style="left:883px;top:504px;width:1px;height:20px;background:#a8b8cf;"></div>
<div class="r" style="left:912px;top:504px;width:1px;height:20px;background:#a8b8cf;"></div>
<div class="r" style="left:971px;top:504px;width:1px;height:20px;background:#a8b8cf;"></div>
<div class="r" style="left:734px;top:504px;width:92px;height:20px;background:linear-gradient(#ffd65c,#ffe07a 60%,#ffe685);border:1px solid #d9a048;box-sizing:border-box;"></div>
<div class="r" style="left:699px;top:524px;width:35px;height:22px;background:#ffd866;border-top:1px solid #d9a048;border-bottom:1px solid #d9a048;box-sizing:border-box;"></div>
<div class="t" style="top:504.26px;font-size:10.8px;line-height:20px;color:#000;font-weight:bold;left:581.00px;width:400px;text-align:center;letter-spacing:0.3px;">Atributo</div>
<svg class="r" style="left:832px;top:506px" width="16" height="16" viewBox="0 0 16 16"><rect width="16" height="16" fill="#fff"/><path d="M2.2 8.6 L6.2 12.4 L14 4.6" fill="none" stroke="#3a7a3a" stroke-width="3.4" stroke-linecap="round" stroke-linejoin="round"/><path d="M2.4 8.6 L6.2 12 L13.8 4.8" fill="none" stroke="#8fdc8a" stroke-width="1.7" stroke-linejoin="round"/></svg>
<svg class="r" style="left:861px;top:506px" width="16" height="16" viewBox="0 0 16 16"><defs><linearGradient id="xg" x1="0" y1="0" x2="0" y2="1"><stop offset="0" stop-color="#f2a58a"/><stop offset="0.45" stop-color="#ef6f6f"/><stop offset="0.55" stop-color="#dc2e2e"/><stop offset="1" stop-color="#d82a2a"/></linearGradient></defs><rect width="16" height="16" fill="#fff"/><path d="M3.3 3.3 L12.7 12.7 M12.7 3.3 L3.3 12.7" stroke="#9b2a2a" stroke-width="5" stroke-linecap="round"/><path d="M3.3 3.3 L12.7 12.7 M12.7 3.3 L3.3 12.7" stroke="url(#xg)" stroke-width="3.4" stroke-linecap="round"/></svg>
<div class="t" style="top:504.26px;font-size:10.8px;line-height:20px;color:#000;font-weight:bold;left:698.50px;width:400px;text-align:center;letter-spacing:0.3px;">NA</div>
<div class="r" style="left:935px;top:507px;width:12px;height:12px;border:1px solid #3391f0;background:#fff;box-shadow:inset 0 0 0 0.3px #3391f0;"></div>
<div class="t" style="top:504.26px;font-size:10.8px;line-height:20px;color:#000;font-weight:bold;left:803.00px;width:400px;text-align:center;letter-spacing:0.3px;">Total</div>
<div class="r" style="left:1032px;top:504px;width:2px;height:105px;background:#6e6e6e;"></div>
<div class="r" style="left:699px;top:608px;width:335px;height:2px;background:#6e6e6e;"></div>
<div class="t" style="top:525.36px;font-size:10.5px;line-height:20px;color:#000;left:737px;">Registro Ok</div>
<div class="t" style="top:525.19px;font-size:11px;line-height:20px;color:#000;left:741.50px;width:400px;text-align:center;">100.00%</div>
<div class="t" style="top:525.19px;font-size:11px;line-height:20px;color:#000;font-weight:bold;right:335px;text-align:right;letter-spacing:0.3px;">100.00%</div>
<div class="t" style="top:546.36px;font-size:10.5px;line-height:20px;color:#000;left:737px;">Req. fiscales</div>
<div class="t" style="top:546.19px;font-size:11px;line-height:20px;color:#000;left:741.50px;width:400px;text-align:center;">100.00%</div>
<div class="t" style="top:546.19px;font-size:11px;line-height:20px;color:#000;font-weight:bold;right:335px;text-align:right;letter-spacing:0.3px;">100.00%</div>
<div class="t" style="top:567.36px;font-size:10.5px;line-height:20px;color:#000;left:737px;">CFDI</div>
<div class="t" style="top:567.19px;font-size:11px;line-height:20px;color:#000;left:741.50px;width:400px;text-align:center;">100.00%</div>
<div class="t" style="top:567.19px;font-size:11px;line-height:20px;color:#000;font-weight:bold;right:335px;text-align:right;letter-spacing:0.3px;">100.00%</div>
<div class="t" style="top:588.36px;font-size:10.5px;line-height:20px;color:#000;left:737px;">IVA desglosado</div>
<div class="t" style="top:588.19px;font-size:11px;line-height:20px;color:#000;left:741.50px;width:400px;text-align:center;">100.00%</div>
<div class="t" style="top:588.19px;font-size:11px;line-height:20px;color:#000;font-weight:bold;right:335px;text-align:right;letter-spacing:0.3px;">100.00%</div>
<div class="r" style="left:27px;top:637px;width:42px;height:10px;border:1px solid #86a4cf;border-radius:3px;background:linear-gradient(90deg,#c9daf3,#a9c6ee 50%,#c4d8f4);"></div>
<div class="r" style="left:35px;top:642px;width:7px;height:2px;background:#000;"></div>
</body></html>
